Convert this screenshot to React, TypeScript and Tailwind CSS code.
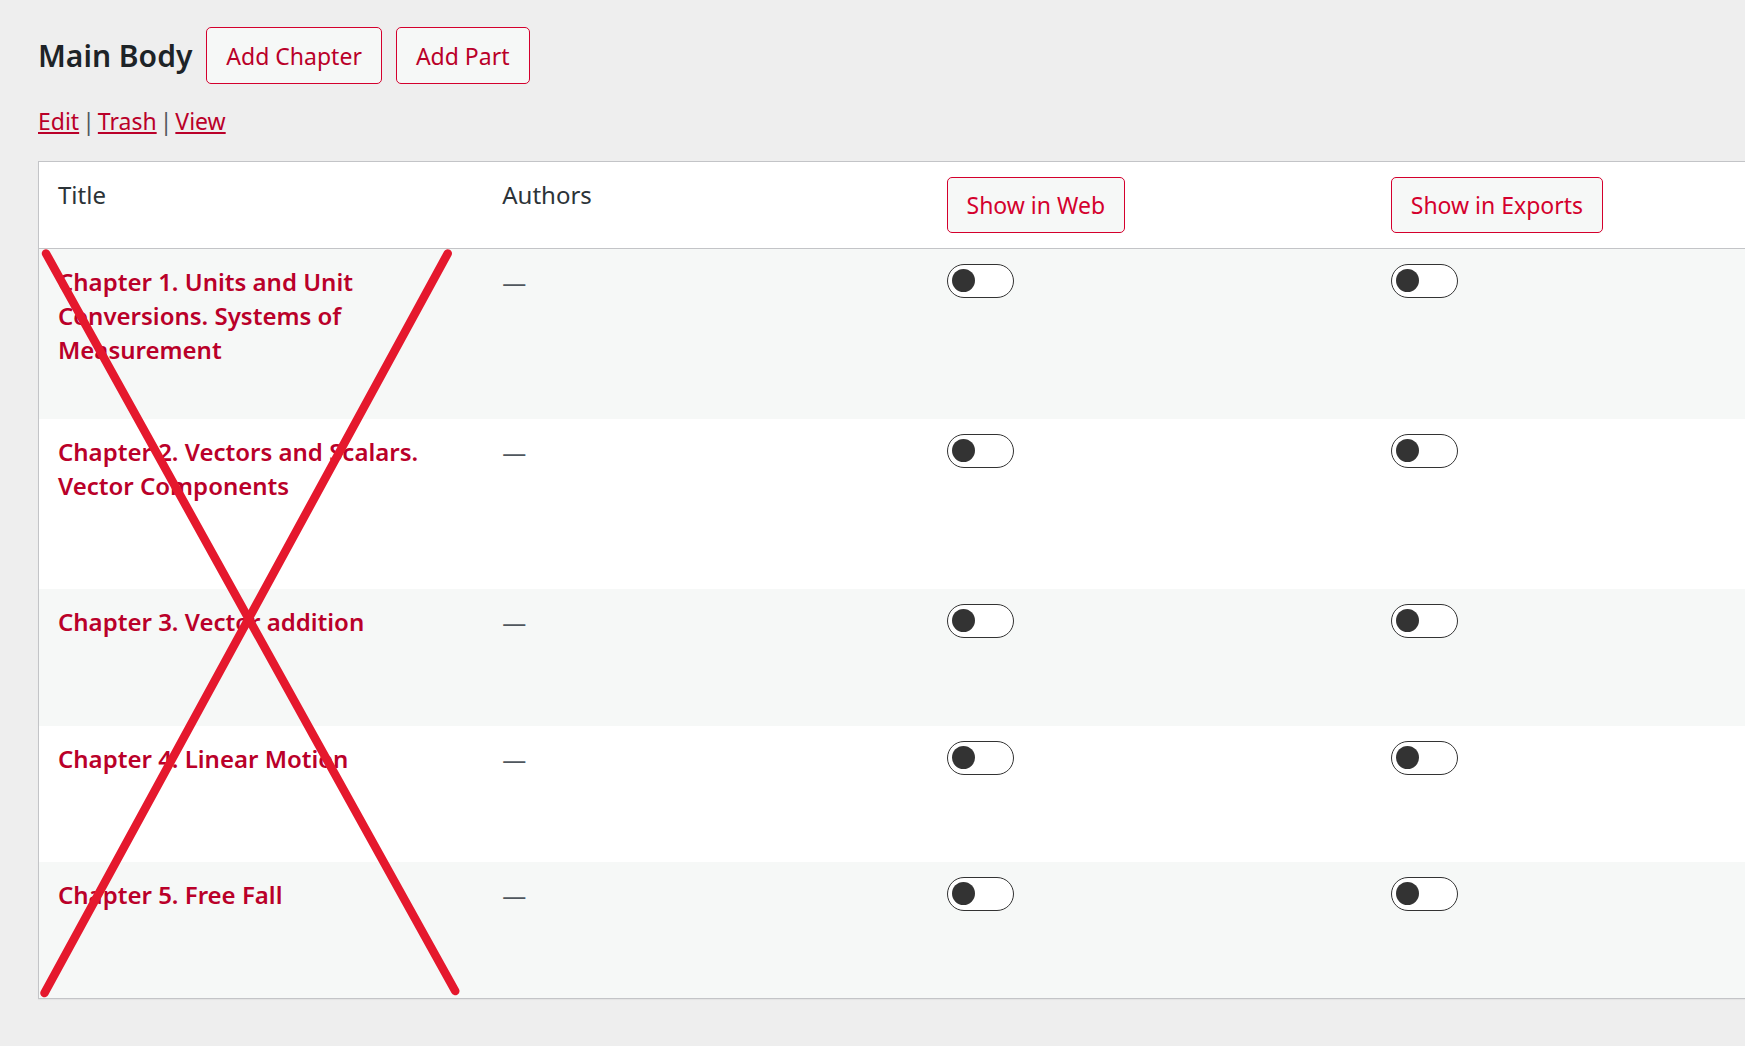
const chapters = [
  { title: 'Chapter 1. Units and Unit Conversions. Systems of Measurement', height: 'h-[170px]' },
  { title: 'Chapter 2. Vectors and Scalars. Vector Components', height: 'h-[170px]' },
  { title: 'Chapter 3. Vector addition', height: 'h-[137px]' },
  { title: 'Chapter 4. Linear Motion', height: 'h-[136px]' },
  { title: 'Chapter 5. Free Fall', height: 'h-[136px]' },
];

function OutlineButton({ label, className }: { label: string; className: string }) {
  return (
    <button
      type="button"
      className={`rounded-[5px] border border-[#d4002d] bg-[#f6f8f7] px-[19px] text-center text-[23px] leading-[34px] whitespace-nowrap ${className}`}
    >
      {label}
    </button>
  );
}

function Toggle({ label }: { label: string }) {
  return (
    <input
      type="checkbox"
      role="switch"
      aria-label={label}
      className="block h-[34px] w-[67px] appearance-none rounded-full border border-[#333333] bg-white px-1 pt-1 before:block before:size-[23px] before:rounded-full before:bg-[#333333] before:content-[''] checked:before:ml-auto"
    />
  );
}

export default function App() {
  return (
    <main className="min-h-screen overflow-hidden bg-[#eeeeee] pt-[27px] pl-[38px] font-['Noto_Sans','Open_Sans',sans-serif] text-[#2c3338]">
      <header className="flex items-center gap-[14px]">
        <h2 className="text-[30px] leading-[40px] font-semibold text-[#1d2327]">Main Body</h2>
        <OutlineButton label="Add Chapter" className="h-[57px] text-[#ba0029]" />
        <OutlineButton label="Add Part" className="h-[57px] text-[#ba0029]" />
      </header>

      <nav aria-label="Part actions" className="mt-5 flex gap-[3px] text-[23px] leading-[34px] text-[#50575e]">
        <a href="#edit" className="text-[#ba0029] underline decoration-2 underline-offset-2">Edit</a>
        <span>|</span>
        <a href="#trash" className="text-[#ba0029] underline decoration-2 underline-offset-2">Trash</a>
        <span>|</span>
        <a href="#view" className="text-[#ba0029] underline decoration-2 underline-offset-2">View</a>
      </nav>

      <div className="relative mt-[23px] w-[calc(100%+72px)] border border-[#c3c4c7] bg-white shadow-[0_1px_1px_rgba(0,0,0,0.04)]">
        <table className="w-full table-fixed border-separate border-spacing-0 text-left align-top">
          <thead>
            <tr className="align-top">
              <th scope="col" className="border-b border-[#c3c4c7] px-[19px] pt-4 text-2xl leading-[34px] font-normal">Title</th>
              <th scope="col" className="border-b border-[#c3c4c7] px-[19px] pt-4 text-2xl leading-[34px] font-normal">Authors</th>
              <th scope="col" className="border-b border-[#c3c4c7] px-[19px] py-[15px] font-normal">
                <OutlineButton label="Show in Web" className="block h-[56px] text-[#d4002d]" />
              </th>
              <th scope="col" className="border-b border-[#c3c4c7] px-[19px] py-[15px] font-normal">
                <OutlineButton label="Show in Exports" className="block h-[56px] text-[#d4002d]" />
              </th>
            </tr>
          </thead>
          <tbody>
            {chapters.map((chapter) => (
              <tr key={chapter.title} className={`align-top odd:bg-[#f6f8f7] ${chapter.height}`}>
                <td className="px-[19px] pt-4 text-2xl leading-[34px] font-semibold">
                  <a href="#chapter" className="text-[#ba0029]">{chapter.title}</a>
                </td>
                <td className="px-[19px] pt-4 text-2xl leading-[34px] text-[#50575e]">—</td>
                <td className="px-[19px] pt-[15px]">
                  <Toggle label={`Show ${chapter.title} in web`} />
                </td>
                <td className="px-[19px] pt-[15px]">
                  <Toggle label={`Show ${chapter.title} in exports`} />
                </td>
              </tr>
            ))}
          </tbody>
        </table>

        {/* Cross drawn over the title column */}
        <svg
          aria-hidden="true"
          viewBox="0 0 444 749"
          preserveAspectRatio="none"
          className="pointer-events-none absolute top-[87px] bottom-0 left-0 h-[749px] w-1/4"
        >
          <g stroke="#e5182d" strokeWidth="8.5" strokeLinecap="round">
            <line x1="7" y1="4.5" x2="416" y2="742" />
            <line x1="408.5" y1="4.5" x2="5.5" y2="744" />
          </g>
        </svg>
      </div>
    </main>
  );
}
